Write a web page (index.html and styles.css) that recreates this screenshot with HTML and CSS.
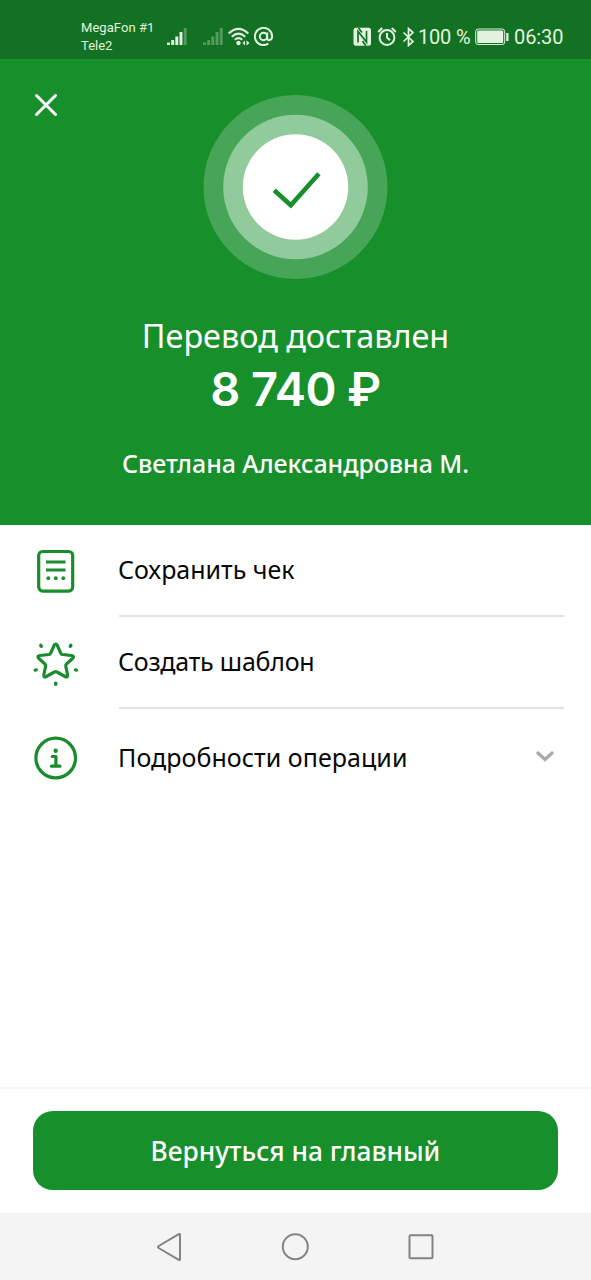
FILE: index.html
```html
<!DOCTYPE html>
<html lang="ru">
<head>
<meta charset="utf-8">
<title>Перевод доставлен</title>
<link rel="stylesheet" href="styles.css">
</head>
<body>
<div class="screen">
  <div class="status">
    <div class="carriers"><div class="carrier-a">MegaFon #1</div><div class="carrier-b">Tele2</div></div>
    <svg class="signal" width="21" height="20" viewBox="0 0 21 20"><path d="M1.5 15.5v2.5M5.700 13v5M9.800 9.500v8.500M14 5v13" /><path class="dim" d="M18.200 1v17"/></svg>
    <svg class="signal second" width="21" height="20" viewBox="0 0 21 20"><path class="dim" d="M1.500 15.500v2.500M5.700 13v5M9.800 9.500v8.500M14 5v13M18.200 1v17"/></svg>
    <svg class="wifi" width="22" height="20" viewBox="0 0 22 20"><path d="M.700 6.500Q10.500-2.700 20.300 6.500M3.800 9.700Q10.500 3.500 17.200 9.700M6.800 12.800Q10.500 9.500 14.200 12.800"/><circle cx="10.500" cy="16" r="2.200"/><path class="solid" d="M17 13.500v5L14.500 16zM18.500 13.500v5L21.500 16z"/></svg>
    <svg class="at" width="20" height="20" viewBox="0 0 20 20"><circle cx="9.500" cy="9.500" r="3.700"/><path d="M13.200 5.500v5.700c0 3 4.900 2.600 4.900-1.700a8.600 8.600 0 1 0-3.800 7.100"/></svg>
    <div class="status-right">
      <svg class="nfc" width="19" height="20" viewBox="0 0 19 20"><rect class="tile" x=".5" y=".8" width="17.500" height="18" rx="2.500"/><path class="cut" d="M5 15.500V4.500l8.500 10.500V4M5.500 1l3.500 4.500M9.500 14l3.500 5"/></svg>
      <svg class="alarm" width="20" height="20" viewBox="0 0 20 20"><circle cx="10" cy="10.500" r="7.400"/><path d="M10 6V10.500l3 2.800M1.200 5l4-4M18.800 5l-4-4"/></svg>
      <svg class="bt" width="13" height="20" viewBox="0 0 13 20"><path d="M1.500 5.500l9.500 9L6.500 18.500v-17L11 5.500l-9.500 9"/></svg>
      <span class="percent">100 %</span>
      <svg class="battery" width="35" height="18" viewBox="0 0 35 18"><rect class="case" x=".7" y="1" width="29" height="15.500" rx="2.500"/><rect x="2.200" y="2.500" width="26" height="12.500" rx="1"/><rect x="31.200" y="5" width="2.300" height="8" rx=".5"/></svg>
      <span class="time">06:30</span>
    </div>
  </div>

  <header class="hero">
    <svg class="close" width="24" height="24" viewBox="0 0 24 24"><path d="M2.500 2.500l19 19M21.500 2.500l-19 19"/></svg>
    <div class="badge"><svg width="185" height="184" viewBox="0 0 185 184"><circle class="ring-a" cx="92.500" cy="92" r="92"/><circle class="ring-b" cx="92.500" cy="92" r="72.300"/><circle class="disc" cx="92.500" cy="92" r="52.700"/><path class="check" d="M71.200 95.200L87.800 110.300L115.900 78.800"/></svg></div>
    <div class="title"><span>Перевод доставлен</span></div>
    <div class="amount"><span>8 740 ₽</span></div>
    <div class="person"><span>Светлана Александровна М.</span></div>
  </header>

  <main class="menu">
    <div class="row">
      <svg class="icon" width="46" height="46" viewBox="0 0 46 46"><rect class="line" x="5.700" y="3.500" width="34" height="39.600" rx="4"/><path class="line" d="M13 14h19.500M13 22h19.500"/><g class="dots"><circle cx="15.300" cy="30.200" r="1.900"/><circle cx="22.800" cy="30.200" r="1.900"/><circle cx="30.300" cy="30.200" r="1.900"/></g></svg>
      <div class="label"><span class="save">Сохранить чек</span></div>
    </div>
    <div class="row">
      <svg class="icon" width="46" height="46" viewBox="0 0 46 46"><path class="line" d="M21 5.500Q22.700 2.500 24.400 5.500L27.800 13.300Q28.300 14.300 29.500 14.500L38.500 15.500Q42 16 39.500 18.500L33.500 24Q32.500 25 32.800 26.300L34.500 34.500Q35 38 32 36.500L24 32Q22.700 31.200 21.400 32L13.400 36.500Q10.400 38 10.900 34.500L12.600 26.300Q12.900 25 11.900 24L5.900 18.500Q3.400 16 6.900 15.500L15.900 14.500Q17.100 14.300 17.600 13.300Z"/><g class="dots"><ellipse cx="8" cy="5.800" rx="1.800" ry="2.300" transform="rotate(-35 8 5.800)"/><ellipse cx="37.600" cy="5.800" rx="1.800" ry="2.300" transform="rotate(35 37.600 5.800)"/><ellipse cx="2.700" cy="30" rx="2.300" ry="1.700" transform="rotate(-20 2.700 30)"/><ellipse cx="43" cy="30" rx="2.300" ry="1.700" transform="rotate(20 43 30)"/><ellipse cx="22.700" cy="43.700" rx="1.800" ry="2.200"/></g></svg>
      <div class="label"><span class="template">Создать шаблон</span></div>
    </div>
    <div class="row last">
      <svg class="icon" width="46" height="46" viewBox="0 0 46 46"><circle class="line" cx="22.700" cy="23" r="19.800"/><circle class="fill" cx="22.700" cy="15.700" r="2.200"/><path class="line round" d="M19.200 21.500h3.700v9.500M18.500 31.200h8.500"/></svg>
      <div class="label"><span class="details">Подробности операции</span>
      <svg class="chevron" width="20" height="14" viewBox="0 0 20 14"><path d="M3 2l7 6.500L17 2"/></svg></div>
    </div>
  </main>

  <footer class="bottom"><button class="button"><span>Вернуться на главный</span></button></footer>
  <nav class="nav">
    <svg width="28" height="30" viewBox="0 0 28 30"><path d="M24 2.800V27.200Q24 28.500 22.800 27.800L2.700 16Q1.400 15 2.700 14L22.800 2.200Q24 1.500 24 2.800Z"/></svg>
    <svg width="28" height="30" viewBox="0 0 28 30"><circle cx="14.300" cy="14.700" r="12.500"/></svg>
    <svg width="28" height="30" viewBox="0 0 28 30"><rect x="2.500" y="3.300" width="23" height="23" rx="1"/></svg>
  </nav>
</div>
</body>
</html>
```
FILE: styles.css
```css
* { box-sizing: border-box; }
body { margin: 0; background: #fff; font-family: "Noto Sans", "Open Sans", sans-serif; }
svg { display: block; flex: none; fill: none; }
.screen { width: 591px; height: 1280px; display: flex; flex-direction: column; overflow: hidden; }

.status { height: 59px; flex: none; background: #137123; color: #e2f3df; display: flex; align-items: center; padding: 14px 28px 0 81px; font-family: Roboto, sans-serif; }
.carriers { width: 86px; font-size: 13px; line-height: 18px; white-space: nowrap; }
.carrier-a { letter-spacing: .05px; }
.status svg { stroke: #e2f3df; stroke-width: 2; }
.status .signal { stroke-width: 2.900; }
.signal .dim { opacity: .32; }
.second { margin-left: 15px; }
.wifi { margin-left: 4px; }
.wifi circle, .wifi .solid { fill: #e2f3df; stroke: none; }
.at { margin-left: 4px; }
.status-right { display: flex; align-items: center; margin-left: auto; }
.nfc .tile { fill: #e2f3df; stroke: none; }
.nfc .cut { stroke: #137123; stroke-width: 1.700; }
.alarm { margin-left: 5px; }
.bt { margin-left: 5px; }
.status .bt { stroke-width: 1.700; }
.percent, .time { font-size: 20px; line-height: 22px; white-space: nowrap; }
.percent { margin-left: 3px; width: 57px; letter-spacing: -.2px; }
.battery rect { fill: #e2f3df; stroke: none; }
.battery .case { fill: none; stroke: #e2f3df; stroke-width: 1; }
.time { margin-left: 4px; width: 49px; letter-spacing: -.1px; }

.hero { position: relative; height: 466px; flex: none; background: #178f2b; color: #fff; display: flex; flex-direction: column; align-items: center; padding-top: 36px; white-space: nowrap; }
.close { position: absolute; left: 34px; top: 34px; stroke: #fff; stroke-width: 3; stroke-linecap: round; }
.ring-a { fill: #47a557; }
.ring-b { fill: #91ca9b; }
.disc { fill: #fff; }
.check { stroke: #178f2b; stroke-width: 4.600; }
.title { margin-top: 33px; font-size: 32.400px; line-height: 46px; }
.amount { margin-top: 3px; font-family: Inter, "Noto Sans", sans-serif; font-size: 47px; line-height: 56px; font-weight: 600; letter-spacing: -.6px; }
.person { margin-top: 29px; font-size: 25px; line-height: 34px; font-weight: 500; letter-spacing: -.05px; }

.menu { flex: 1; color: #080808; }
.row { display: flex; align-items: center; height: 92px; padding: 0 27px 0 33px; }
.label { display: flex; align-items: center; justify-content: space-between; flex: 1; height: 91px; margin-left: 40px; border-bottom: 2px solid #e2e2e2; font-size: 25px; white-space: nowrap; }
.label span { margin: -2px 0 0 -1px; }
.template { letter-spacing: -.23px; }
.details { letter-spacing: .05px; }
.last { height: 98px; }
.last .label { height: 98px; border: 0; }
.icon .line { stroke: #198c2e; stroke-width: 3.200; }
.icon .round { stroke-linecap: round; stroke-linejoin: round; }
.dots, .icon .fill { fill: #198c2e; }
.chevron { margin-right: 9px; stroke: #ababab; stroke-width: 3.400; stroke-linecap: round; }

.bottom { height: 126px; flex: none; border-top: 2px solid #f6f6f6; padding: 22px 33px 0; }
.button { display: block; width: 525px; height: 79px; padding: 0; border: 0; border-radius: 20px; background: #178f2b; color: #fff; font: 500 26.300px "Noto Sans", sans-serif; }
.nav { height: 67px; flex: none; display: flex; align-items: center; justify-content: center; gap: 97.500px; padding-right: 1px; background: #f4f4f4; }
.nav svg { stroke: #838383; stroke-width: 2; }
```
